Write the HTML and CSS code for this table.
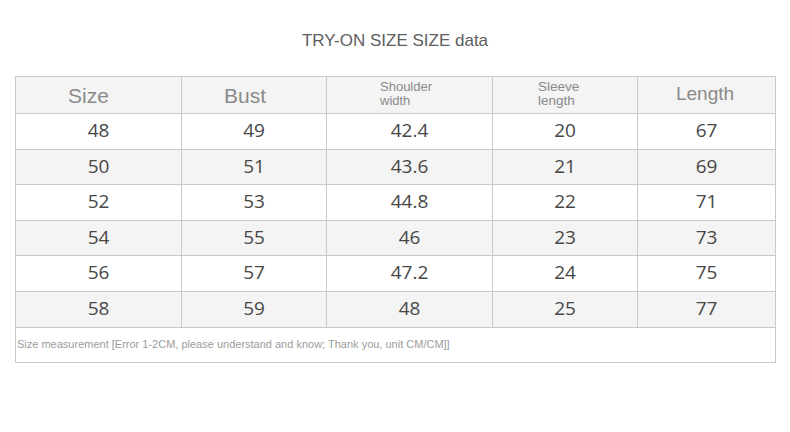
FILE: index.html
```html
<!DOCTYPE html>
<html>
<head>
<meta charset="utf-8">
<link rel="stylesheet" href="styles.css">
</head>
<body>
<div class="page">
  <h1 class="title">TRY-ON SIZE SIZE data</h1>
  <table class="size-table">
    <colgroup>
      <col class="c1"><col class="c2"><col class="c3"><col class="c4"><col class="c5">
    </colgroup>
    <thead>
      <tr class="head">
        <th class="h-size">Size</th>
        <th class="h-bust">Bust</th>
        <th class="h-small h-shoulder"><span>Shoulder<br>width</span></th>
        <th class="h-small h-sleeve"><span>Sleeve<br>length</span></th>
        <th class="h-length">Length</th>
      </tr>
    </thead>
    <tbody>
      <tr class="r-a"><td>48</td><td>49</td><td>42.4</td><td>20</td><td>67</td></tr>
      <tr class="r-b shade"><td>50</td><td>51</td><td>43.6</td><td>21</td><td>69</td></tr>
      <tr class="r-a"><td>52</td><td>53</td><td>44.8</td><td>22</td><td>71</td></tr>
      <tr class="r-b shade"><td>54</td><td>55</td><td>46</td><td>23</td><td>73</td></tr>
      <tr class="r-a"><td>56</td><td>57</td><td>47.2</td><td>24</td><td>75</td></tr>
      <tr class="r-a shade"><td>58</td><td>59</td><td>48</td><td>25</td><td>77</td></tr>
      <tr class="note"><td colspan="5">Size measurement [Error 1-2CM, please understand and know; Thank you, unit CM/CM]]</td></tr>
    </tbody>
  </table>
</div>
</body>
</html>
```

FILE: styles.css
```css
html, body {
  margin: 0;
  padding: 0;
  background: #ffffff;
}

.page {
  width: 790px;
  height: 432px;
  padding: 0 0 0 15px;
  box-sizing: border-box;
}

.title {
  margin: 0;
  height: 76px;
  box-sizing: border-box;
  padding: 32px 0 0 0;
  font-family: "Liberation Sans", Arial, sans-serif;
  font-weight: normal;
  font-size: 17px;
  line-height: 18px;
  color: #5e5e5e;
  text-align: center;
  width: 760px;
}

.size-table {
  border-collapse: collapse;
  table-layout: fixed;
  width: 761px;
  border: 1px solid #9a9a9a;
}

.c1 { width: 166px; }
.c2 { width: 145px; }
.c3 { width: 166px; }
.c4 { width: 145px; }
.c5 { width: 138px; }

.size-table th,
.size-table td {
  border: 1px solid #c9c9c9;
  padding: 0;
  text-align: center;
  vertical-align: middle;
}

.head {
  height: 37px;
  background: #f4f4f4;
}

.size-table th {
  font-family: "Liberation Sans", Arial, sans-serif;
  font-weight: normal;
  color: #8a8a8a;
  font-size: 21px;
}

.size-table .h-size { padding: 2px 20px 0 0; }
.size-table .h-bust { padding: 2px 18px 0 0; }
.size-table .h-length { font-size: 19px; padding: 0 3px 2px 0; }

.size-table .h-small {
  text-align: left;
}

.h-small span {
  display: block;
}

.size-table .h-shoulder {
  font-size: 13px;
  padding: 0 0 3px 53px;
}

.h-shoulder span { line-height: 14px; }

.size-table .h-sleeve {
  font-size: 13.5px;
  padding: 0 0 3px 45px;
}

.h-sleeve span { line-height: 14px; }

.size-table td {
  font-family: "Open Sans", "Noto Sans", sans-serif;
  font-size: 19px;
  color: #474747;
  padding-bottom: 3px;
}

.r-a { height: 36px; }
.r-b { height: 35px; }

.shade { background: #f4f4f4; }

.note {
  height: 35px;
}

.size-table .note td {
  text-align: left;
  font-family: "Liberation Sans", Arial, sans-serif;
  font-size: 11px;
  color: #9c9c9c;
  padding: 0 0 3px 1px;
}
```
